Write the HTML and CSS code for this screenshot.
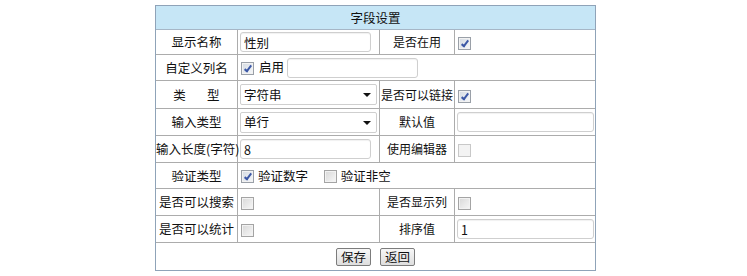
FILE: index.html
```html
<!DOCTYPE html>
<html lang="zh-CN">
<head>
  <meta charset="UTF-8" />
  <title>字段设置</title>
  <link rel="stylesheet" href="styles.css">
</head>
<body>
  <div class="page">
    <table class="field-table">
      <colgroup>
        <col class="col-label">
        <col class="col-value">
        <col class="col-label2">
        <col class="col-value2">
      </colgroup>
      <tr class="head">
        <td colspan="4">字段设置</td>
      </tr>
      <tr class="r1">
        <td class="label">显示名称</td>
        <td><input class="text w131" type="text" value="性别"></td>
        <td class="label small">是否在用</td>
        <td><input class="cb" type="checkbox" checked></td>
      </tr>
      <tr class="r2">
        <td class="label">自定义列名</td>
        <td colspan="3">
          <label class="check"><input class="cb" type="checkbox" checked>启用</label>
          <input class="text w131" type="text">
        </td>
      </tr>
      <tr class="r3">
        <td class="label">类&emsp;&ensp;&#8201;型</td>
        <td>
          <span class="select-wrap"><select><option>字符串</option></select></span>
        </td>
        <td class="label small">是否可以链接</td>
        <td><input class="cb" type="checkbox" checked></td>
      </tr>
      <tr class="r4">
        <td class="label">输入类型</td>
        <td>
          <span class="select-wrap"><select><option>单行</option></select></span>
        </td>
        <td class="label small">默认值</td>
        <td><input class="text w137" type="text"></td>
      </tr>
      <tr class="r5">
        <td class="label">输入长度(字符)</td>
        <td><input class="text w131" type="text" value="8"></td>
        <td class="label small">使用编辑器</td>
        <td><input class="cb" type="checkbox" disabled></td>
      </tr>
      <tr class="r6">
        <td class="label">验证类型</td>
        <td colspan="3">
          <label class="check"><input class="cb" type="checkbox" checked>验证数字</label>
          <label class="check"><input class="cb" type="checkbox">验证非空</label>
        </td>
      </tr>
      <tr class="r7">
        <td class="label">是否可以搜索</td>
        <td><input class="cb" type="checkbox"></td>
        <td class="label small">是否显示列</td>
        <td><input class="cb" type="checkbox"></td>
      </tr>
      <tr class="r8">
        <td class="label">是否可以统计</td>
        <td><input class="cb" type="checkbox"></td>
        <td class="label small">排序值</td>
        <td><input class="text w137" type="text" value="1"></td>
      </tr>
      <tr class="r9">
        <td colspan="4" class="actions">
          <button type="button">保存</button>
          <button type="button">返回</button>
        </td>
      </tr>
    </table>
  </div>
</body>
</html>
```

FILE: styles.css
```css
body {
  margin: 0;
  background: #ffffff;
  font-family: "Noto Sans CJK SC", "DejaVu Sans", sans-serif;
  font-size: 12.5px;
  color: #111111;
}

.page {
  padding: 5px 0 0 4px;
}

.field-table {
  width: 441px;
  margin: 0 auto;
  table-layout: fixed;
  border-collapse: separate;
  border-spacing: 0;
  border: 1px solid #8fa3b8;
}

.col-label { width: 82px; }
.col-value { width: 142px; }
.col-label2 { width: 75px; }
.col-value2 { width: 140px; }

.field-table td {
  box-sizing: border-box;
  height: 27px;
  padding: 0 2px;
  border-right: 1px solid #acacac;
  border-bottom: 1px solid #acacac;
  vertical-align: middle;
  white-space: nowrap;
  line-height: 16px;
}

.field-table td:last-child {
  border-right: none;
}

.field-table tr:last-child td {
  border-bottom: none;
}

.field-table .head td {
  height: 24px;
  background: #c6e6f6;
  text-align: center;
  border-bottom-color: #a6b6c6;
}

.field-table .r1 td { height: 25px; }
.field-table .r2 td { height: 26px; }
.field-table .r3 td { height: 28px; }
.field-table .r6 td { height: 26px; }
.field-table .r9 td { height: 27px; }

.field-table td.label {
  text-align: center;
  padding: 0;
  overflow: visible;
}

.field-table td.small {
  font-size: 12px;
}

/* text inputs */
.text {
  box-sizing: border-box;
  height: 20px;
  margin: 0;
  padding: 0 3px;
  border: 1px solid #cfcfcf;
  border-radius: 3px;
  box-shadow: inset 0 1px 1px rgba(0, 0, 0, 0.06);
  font: inherit;
  color: #111111;
  vertical-align: middle;
  outline: none;
}

.w131 { width: 131px; }
.w137 { width: 137px; }

/* selects */
.select-wrap {
  position: relative;
  display: inline-block;
  vertical-align: middle;
}

.select-wrap select {
  -webkit-appearance: none;
  appearance: none;
  box-sizing: border-box;
  width: 137px;
  height: 21px;
  margin: 0;
  padding: 0 3px;
  border: 1px solid #cfcfcf;
  border-radius: 2px;
  background: #ffffff;
  font: inherit;
  color: #111111;
  outline: none;
}

.select-wrap::after {
  content: "";
  position: absolute;
  right: 6px;
  top: 9px;
  border-left: 4px solid transparent;
  border-right: 4px solid transparent;
  border-top: 4px solid #111111;
  pointer-events: none;
}

/* checkboxes */
.cb {
  -webkit-appearance: none;
  appearance: none;
  position: relative;
  box-sizing: border-box;
  width: 13px;
  height: 13px;
  margin: 0 0 0 1px;
  border: 1px solid #a4a4a4;
  background: linear-gradient(135deg, #d8d8d8, #f7f7f7);
  box-shadow: inset 0 0 0 1px #f2f2f2;
  vertical-align: middle;
}

.cb:checked {
  border-color: #9aa0a8;
  background: linear-gradient(135deg, #d4dae2, #f6f8fa);
}

.cb:checked::after {
  content: "";
  position: absolute;
  left: 4px;
  top: 1px;
  width: 2px;
  height: 6px;
  border-right: 2px solid #3c58a6;
  border-bottom: 2px solid #3c58a6;
  transform: rotate(38deg);
}

.cb:disabled {
  border-color: #c8c8c8;
  background: #f3f3f3;
  box-shadow: none;
}

.check {
  display: inline-block;
  margin-right: 12px;
  vertical-align: middle;
}

.check .cb {
  margin-right: 4px;
  position: relative;
  top: -1px;
}

.r2 .check {
  margin-right: 0;
}

.r2 .check .cb {
  margin-right: 5px;
}

/* buttons */
.actions {
  text-align: center;
}

.actions button {
  height: 18px;
  margin: 0 3px;
  padding: 0 4px;
  border: 1px solid #7c7c7c;
  border-radius: 2px;
  background: linear-gradient(#f7f7f7, #dedede);
  font: inherit;
  line-height: 14px;
  color: #111111;
  vertical-align: middle;
}
```
